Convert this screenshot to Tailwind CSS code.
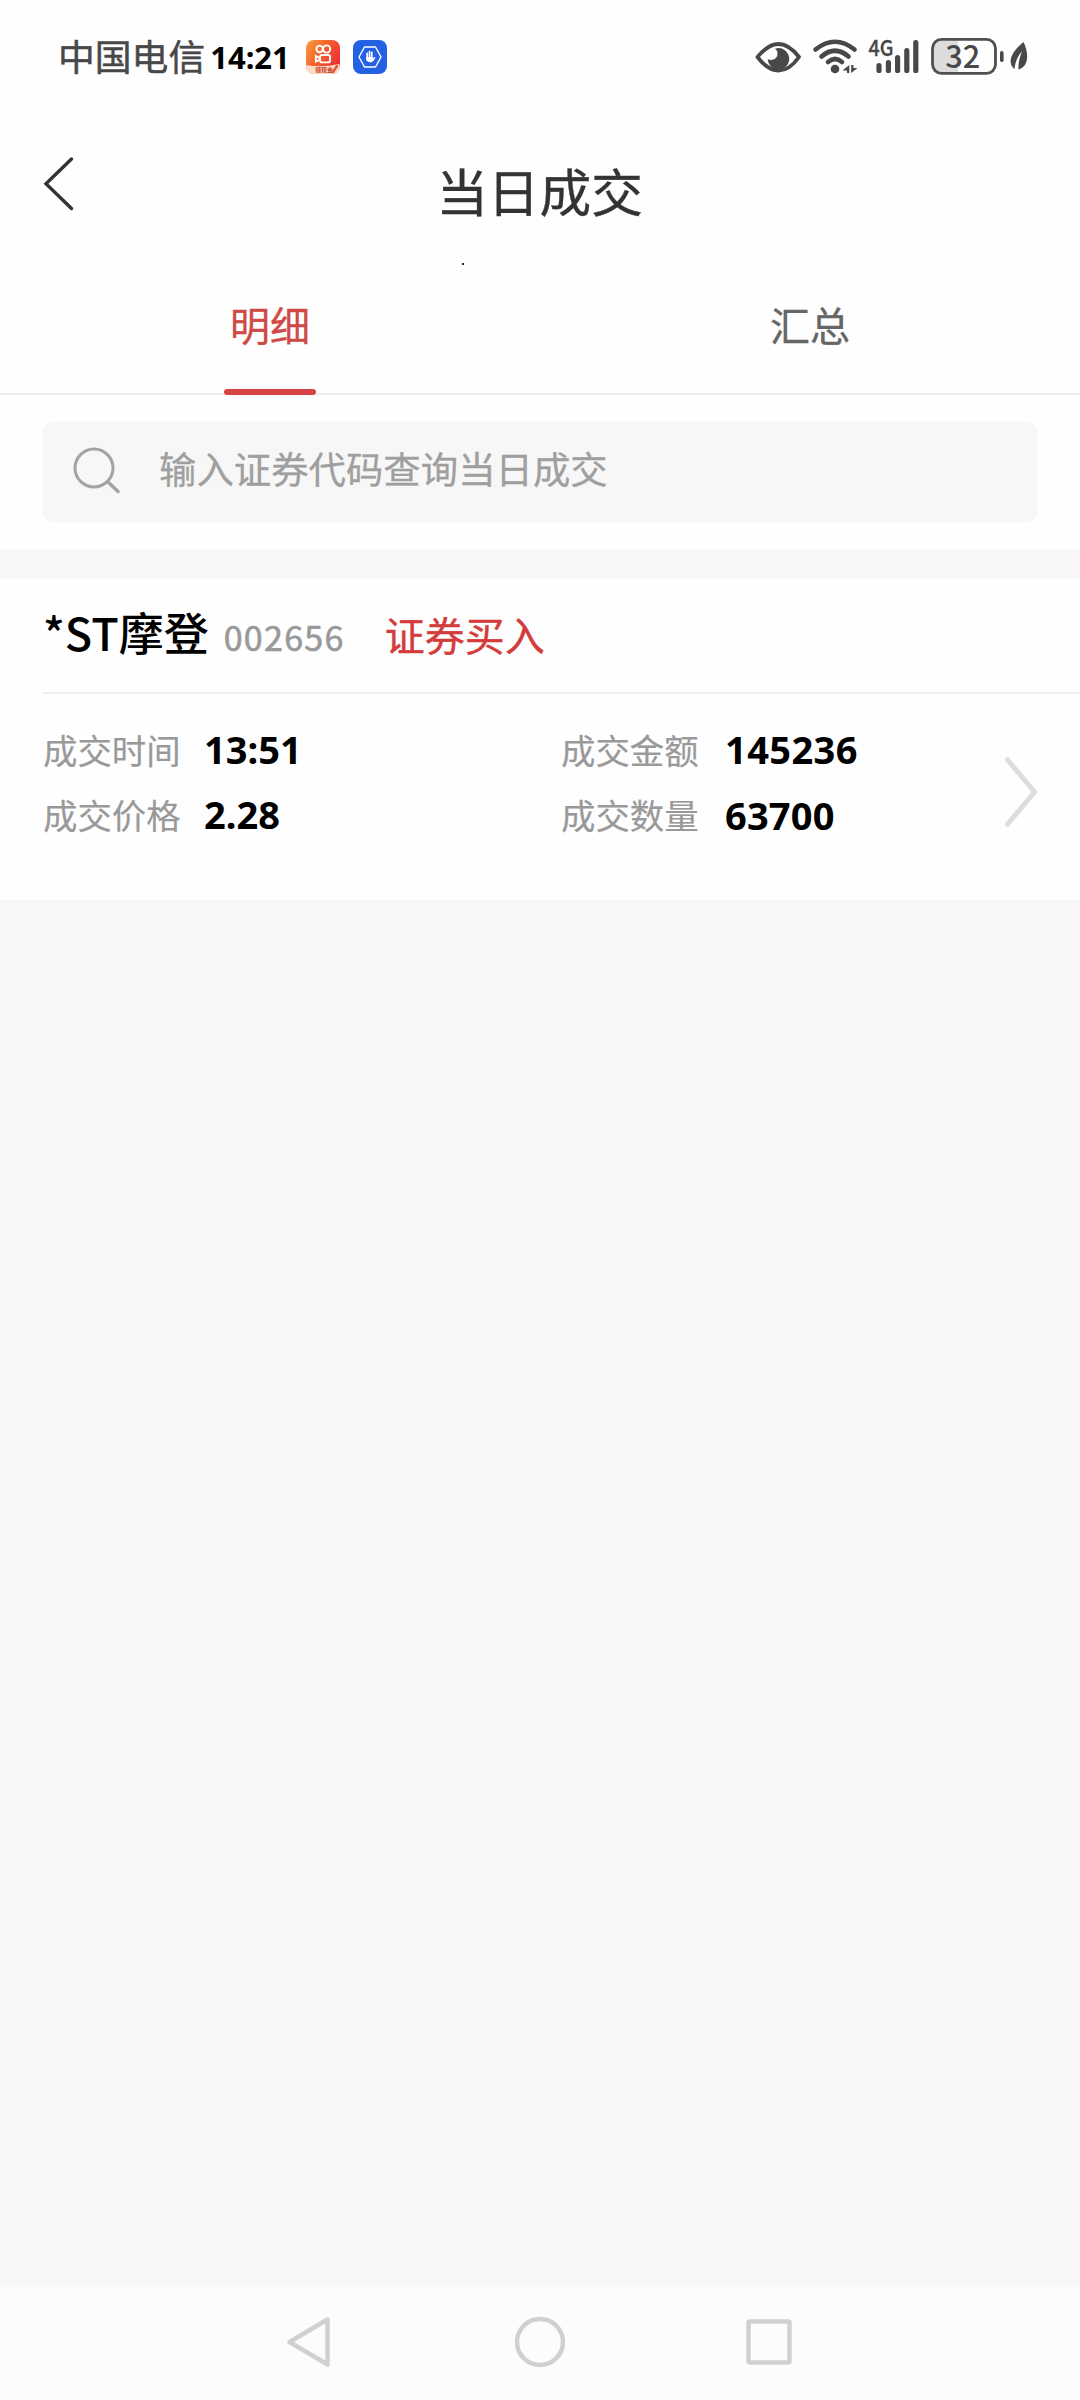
<!DOCTYPE html>
<html lang="zh-CN">
<head>
    <meta charset="UTF-8">
    <meta name="viewport" content="width=device-width, initial-scale=1.0">
    <title>当日成交</title>
    <script src="https://cdn.jsdelivr.net/npm/@tailwindcss/browser@4"></script>
</head>
<body class="bg-[#f8f6f9] font-['Noto_Sans_CJK_SC',sans-serif]">
    <div class="flex flex-col w-[1080px] h-[2400px] overflow-hidden">

        <!-- Status bar -->
        <div class="flex items-center h-[114px] pl-[58px] bg-[#fefefe]">
            <span class="pb-[3px] text-[36.8px] leading-none text-[#484848] [-webkit-text-stroke:0.5px]">中国电信</span>
            <span class="ml-[5px] text-[31px] leading-none font-bold text-black font-['Noto_Sans',sans-serif]">14:21</span>
            <svg class="ml-[16px]" width="34" height="34" viewBox="0 0 34 34">
                <defs>
                    <linearGradient id="cam" x1="0" y1="0" x2="1" y2="0.6">
                        <stop offset="0" stop-color="#f9a03c" />
                        <stop offset="0.5" stop-color="#f4602c" />
                        <stop offset="1" stop-color="#ee2f36" />
                    </linearGradient>
                </defs>
                <rect width="34" height="34" rx="8" fill="url(#cam)" />
                <path d="M0 25 Q16 28 33 24 L34 26 Q34 34 26 34 L8 34 Q0 34 0 25Z" fill="#fbdcc4" />
                <g fill="none" stroke="#fff" stroke-width="1.9">
                    <circle cx="13.6" cy="9" r="3.2" />
                    <circle cx="20.6" cy="9" r="3.6" />
                    <rect x="14" y="15" width="10" height="7.4" rx="2" />
                    <path d="M13.5 17.8 L9.8 16 V21.5 L13.5 19.8Z" />
                </g>
                <text x="9" y="32" font-size="6" font-weight="700" fill="#c8402c">领现金</text>
                <path d="M27 32 L31 26" stroke="#e4553a" stroke-width="2.5" stroke-linecap="round" />
            </svg>
            <svg class="ml-[13px]" width="34" height="34" viewBox="0 0 34 34">
                <rect width="34" height="34" rx="8" fill="#2360e4" />
                <path d="M11.5 7 H22.5 L28 17 L22.5 27 H11.5 L6 17Z" fill="none" stroke="#fff" stroke-width="1.4" stroke-linejoin="round" />
                <path d="M14.2 20 V13.4 M16.5 18 V11.6 M18.8 18 V12.4" stroke="#fff" stroke-width="1.7" stroke-linecap="round" />
                <path d="M13.3 17 H19.6 V18.8 L21.6 16.8 L22.4 17.6 Q20.5 22.4 17.5 22.4 Q13.3 22.4 13.3 18Z" fill="#fff" />
            </svg>

            <svg class="ml-auto mr-[50px]" width="276" height="76" viewBox="754 19 276 76">
                <!-- eye -->
                <path d="M757.5 57 C765 48 771 44 778.5 44 C786 44 792 48 799 57 C792 67 786 70.5 778.5 70.5 C771 70.5 765 67 757.5 57Z" fill="none" stroke="#484848" stroke-width="3.8" stroke-linejoin="round" />
                <path d="M777 48.2 A10.7 10.7 0 1 1 767.8 59 Q769.5 60.2 772.5 59.8 Q777.5 58.6 777.5 53.5 Q777.5 50.5 775 48.8Z" fill="#484848" />
                <!-- wifi -->
                <g fill="none" stroke="#484848" stroke-width="4.6" stroke-linecap="round">
                    <path d="M815.5 49.5 Q835 34 854.5 49.5" />
                    <path d="M821.5 56.5 Q835 45 848.5 56.5" />
                    <path d="M828 62 Q835 56 842 62" />
                </g>
                <circle cx="835" cy="69" r="4.3" fill="#484848" />
                <path d="M849.3 65 V73 H847 V70.5 L842.5 70.5 Z M851.2 65 V73 L857.5 68 H853.4 V65Z" fill="#484848" />
                <!-- signal -->
                <text x="868.5" y="56" font-size="22" font-weight="500" fill="#484848" stroke="#484848" stroke-width="0.3" textLength="25" lengthAdjust="spacingAndGlyphs">4G</text>
                <g stroke="#484848" stroke-width="5.2" stroke-linecap="round">
                    <path d="M879 65.5 V70.5 M888.4 62.5 V70.5 M897.6 57.5 V70.5 M906.8 50.5 V70.5 M915.8 42.5 V70.5" />
                </g>
                <!-- battery -->
                <path d="M942 39.5 H958 V73 H942 Q933 73 933 64 V48 Q933 39.5 942 39.5Z" fill="#dcdcdc" />
                <rect x="932.5" y="39.3" width="63" height="34" rx="9" fill="none" stroke="#505050" stroke-width="2.8" />
                <rect x="1000" y="51" width="3.6" height="11" rx="1.8" fill="#484848" />
                <text x="945.3" y="67.5" font-size="31" font-weight="500" fill="#484848" textLength="35" lengthAdjust="spacingAndGlyphs">32</text>
                <!-- leaf -->
                <path d="M1023.5 42 C1029 53 1029 67 1018.5 69.5 C1018 63 1020 57 1022 51 C1018 56 1015 62 1014.5 69 C1008 64 1009 54 1023.5 42Z" fill="#484848" />
            </svg>
        </div>

        <!-- Title bar -->
        <div class="grid grid-cols-[120px_1fr_120px] h-[160px] bg-[#fefefe]">
            <svg class="ml-[42px] mt-[40px]" width="34" height="60" viewBox="0 0 34 60">
                <path d="M29.5 5 L4 29.8 L29.5 54.5" fill="none" stroke="#333" stroke-width="3.4" stroke-linecap="round" />
            </svg>
            <div class="relative text-center">
                <h1 class="pt-[50px] pr-[1px] text-[51.7px] leading-[52px] text-[#333] [-webkit-text-stroke:0.4px]">当日成交</h1>
                <span class="absolute left-[342px] top-[149px] w-[2px] h-[2px] bg-[#333]"></span>
            </div>
        </div>

        <!-- Tabs -->
        <div class="grid grid-cols-2 h-[121px] border-b-2 border-[#eeeeee] bg-[#fefefe] text-[40px] leading-[40px] text-center">
            <div class="flex flex-col items-center justify-between h-[121px] pt-[30px] text-[#cf4a46]">
                <span class="[-webkit-text-stroke:0.3px]">明细</span>
                <span class="w-[92px] h-[6px] rounded-full bg-[#d84444]"></span>
            </div>
            <div class="pt-[30px] text-[#666] [-webkit-text-stroke:0.3px]">汇总</div>
        </div>

        <!-- Search -->
        <div class="px-[43px] pt-[27px] pb-[28px] bg-[#fefefe]">
            <div class="flex items-center h-[100px] pl-[28px] rounded-[9px] bg-[#f7f7f7]">
                <svg width="50" height="50" viewBox="0 0 50 50">
                    <circle cx="23" cy="21" r="19" fill="none" stroke="#a3a3a3" stroke-width="3" />
                    <path d="M37 35 L47 44.5" stroke="#a3a3a3" stroke-width="3.4" stroke-linecap="round" />
                </svg>
                <span class="ml-[38px] pb-[7px] text-[37.4px] leading-none text-[#9f9f9f] [-webkit-text-stroke:0.3px]">输入证券代码查询当日成交</span>
            </div>
        </div>

        <!-- Trade record -->
        <div class="mt-[28px] h-[322px] bg-[#fefefe]">
            <div class="flex items-baseline h-[116px] ml-[43px] pt-[31px] border-b-2 border-[#eeeeee] leading-[46px]">
                <span class="text-[45px] font-medium text-black">*ST摩登</span>
                <span class="ml-[15px] text-[34px] tracking-[1.3px] text-[#999] [-webkit-text-stroke:0.6px]">002656</span>
                <span class="ml-[40px] text-[40px] text-[#d43b3b] [-webkit-text-stroke:0.4px]">证券买入</span>
            </div>
            <div class="flex items-center pl-[43px] pt-[23px]">
                <div class="grid grid-cols-[518px_444px] text-[34.4px] leading-[65px] text-[#999]">
                    <div class="flex"><span class="w-[161px] [-webkit-text-stroke:0.2px]">成交时间</span><b class="text-[38px] text-black font-['Noto_Sans',sans-serif]">13:51</b></div>
                    <div class="flex"><span class="w-[164px] [-webkit-text-stroke:0.2px]">成交金额</span><b class="text-[38px] tracking-[0.4px] text-black font-['Noto_Sans',sans-serif]">145236</b></div>
                    <div class="flex"><span class="w-[161px] [-webkit-text-stroke:0.2px]">成交价格</span><b class="text-[38px] text-black font-['Noto_Sans',sans-serif]">2.28</b></div>
                    <div class="flex"><span class="w-[164px] [-webkit-text-stroke:0.2px]">成交数量</span><b class="pt-[1px] text-[38px] tracking-[0.2px] text-black font-['Noto_Sans',sans-serif]">63700</b></div>
                </div>
                <svg class="mt-[18px]" width="34" height="70" viewBox="0 0 34 70">
                    <path d="M1 1 L29.5 35 L1 69" fill="none" stroke="#dddddd" stroke-width="5" />
                </svg>
            </div>
        </div>

        <!-- System navigation -->
        <div class="flex items-center mt-auto h-[115px] pl-[284px] pb-[2px] bg-[#fcfcfd]">
            <svg width="512" height="56" viewBox="284 2314 512 56" fill="none" stroke="#d0d0d0" stroke-width="4.5" stroke-linejoin="round">
                <path d="M327.5 2319.5 L289.5 2342 L327.5 2364.5Z" />
                <circle cx="540" cy="2342" r="23" />
                <rect x="748.5" y="2321.5" width="41" height="41" rx="1.5" />
            </svg>
        </div>
    </div>
</body>
</html>
